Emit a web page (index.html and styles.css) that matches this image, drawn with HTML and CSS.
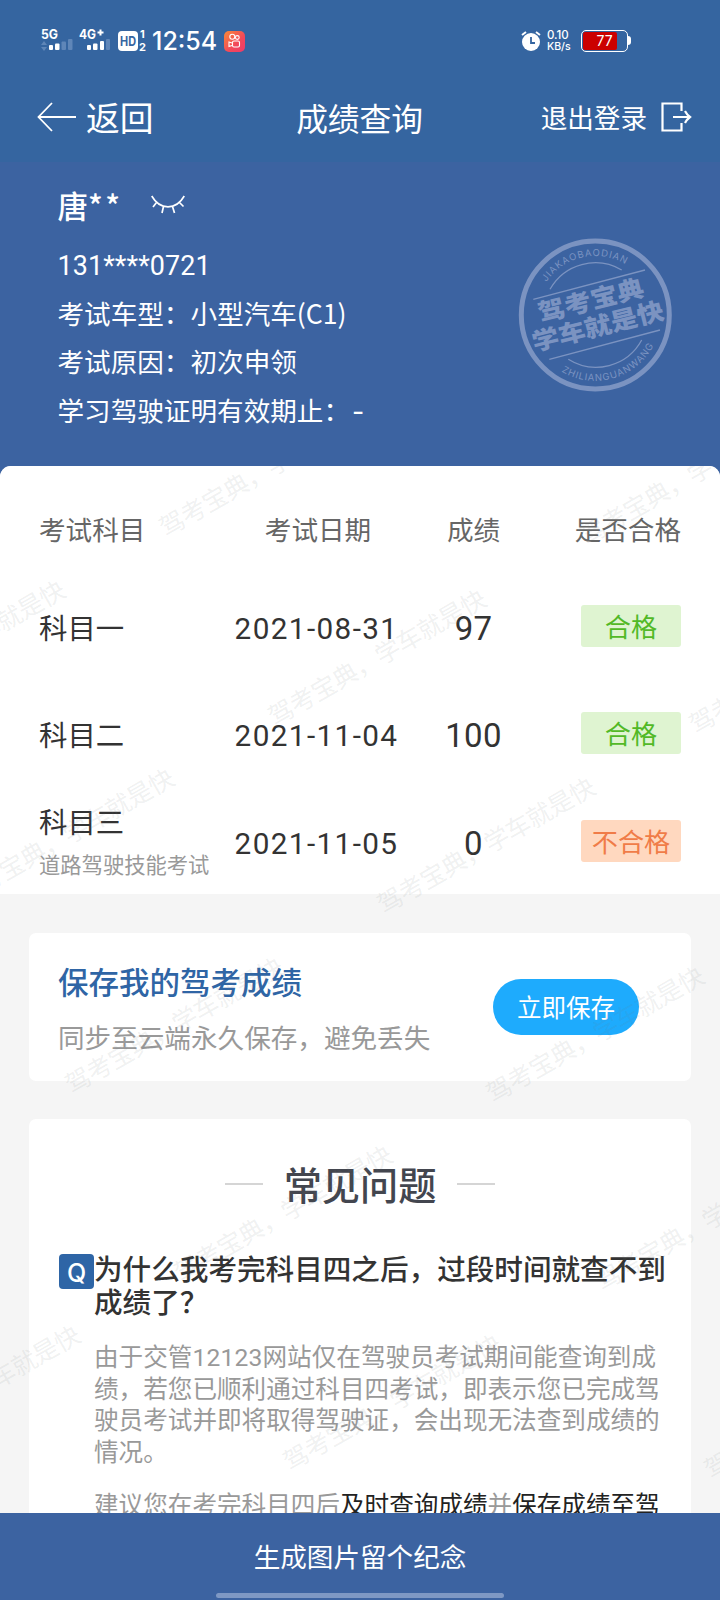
FILE: index.html
```html
<!DOCTYPE html>
<html lang="zh-CN">
<head>
    <meta charset="UTF-8">
    <meta name="viewport" content="width=device-width, initial-scale=1.0">
    <title>成绩查询</title>
    <link rel="stylesheet" href="styles.css">
</head>
<body>

    <div class="screen">
        <div class="top">
            <div class="status-bar">
                <svg class="signals" width="106" height="24" viewBox="0 0 106 24">
                    <g fill="#fff" class="net-label">
                        <text x="0" y="11" textLength="17" lengthAdjust="spacingAndGlyphs">5G</text>
                        <text x="38" y="11" textLength="17" lengthAdjust="spacingAndGlyphs">4G</text>
                        <path d="M56.500 4.500h6M59.500 1.500v6" stroke="#fff" stroke-width="2"/>
                        <rect x="8" y="17" width="4" height="5" rx="1"/>
                        <rect x="14" y="15.500" width="4.500" height="6.500" rx="1"/>
                        <rect x="46" y="17" width="4" height="5" rx="1"/>
                        <rect x="52" y="15.500" width="4.500" height="6.500" rx="1"/>
                        <rect x="59" y="13" width="4" height="9" rx="1"/>
                    </g>
                    <g fill="#5f86b8">
                        <path d="M0 17l3-4 3 4zM0 19h6l-3 4z"/>
                        <rect x="20.500" y="13.500" width="4.500" height="8.500" rx="1"/>
                        <rect x="27" y="11" width="4.500" height="11" rx="1"/>
                        <rect x="65" y="11" width="4" height="11" rx="1"/>
                    </g>
                    <rect x="77" y="3" width="20" height="20" rx="4" fill="#fff"/>
                    <text x="79" y="17.500" textLength="16" lengthAdjust="spacingAndGlyphs" class="hd">HD</text>
                    <text x="99" y="10" class="sim">1</text>
                    <text x="98" y="22.500" class="sim">2</text>
                </svg>
                <span class="time">12:54</span>
                <svg class="app-icon" width="21" height="21" viewBox="0 0 21 21">
                    <defs>
                        <linearGradient id="app-bg" x1="0" y1="0" x2="1" y2="1">
                            <stop offset="0" stop-color="#f98a38"/>
                            <stop offset=".6" stop-color="#f2485a"/>
                            <stop offset="1" stop-color="#ee3a6a"/>
                        </linearGradient>
                    </defs>
                    <rect width="21" height="21" rx="5" fill="url(#app-bg)"/>
                    <g fill="none" stroke="#fff" stroke-width="1.100">
                        <circle cx="8.300" cy="5.800" r="2.500"/>
                        <circle cx="13.300" cy="6.500" r="1.900"/>
                        <rect x="8.500" y="10" width="7" height="6" rx="1.500"/>
                        <path d="M8 12l-3-1v4.500l3-1"/>
                    </g>
                </svg>
                <svg class="alarm" width="20" height="22" viewBox="0 0 20 22">
                    <circle cx="10" cy="12" r="9" fill="#fff"/>
                    <path d="M1 5l4-3M19 5l-4-3" stroke="#fff" stroke-width="2"/>
                    <path d="M10 7v6h4" fill="none" stroke="#3565a0" stroke-width="1.800"/>
                </svg>
                <div class="speed"><span>0.10</span><span>KB/s</span></div>
                <div class="battery"><div class="battery-fill"></div><span>77</span></div>
            </div>

            <div class="nav-bar">
                <div class="back">
                    <svg width="40" height="30" viewBox="0 0 40 30" fill="none" stroke="#fff" stroke-width="1.800">
                        <path d="M15 1L1.500 15 15 29M1.500 15H39"/>
                    </svg>
                    <span>返回</span>
                </div>
                <div class="page-title">成绩查询</div>
                <div class="logout">
                    <span>退出登录</span>
                    <svg width="31" height="30" viewBox="0 0 31 30" fill="none" stroke="#fff" stroke-width="2.200">
                        <path d="M20.500 9V1.500H1.500v27h19V21M12 15h17M24 9c1.500 3 3 4.500 5 6-2 1.500-3.500 3-5 6"/>
                    </svg>
                </div>
            </div>
        </div>

        <div class="profile">
            <div class="name">
                <span>唐<span class="stars">**</span></span>
                <svg width="34" height="20" viewBox="0 0 34 20" fill="none" stroke="#fff" stroke-width="1.700">
                    <path d="M.7 1C9 15.500 25 15.500 33.300 1M5.500 7.500L2 12M12.500 11.500L11 18M21.500 11.500l2 6.500M28.500 7.500l4 4"/>
                </svg>
            </div>
            <p class="id-number">131****0721</p>
            <p>考试车型：小型汽车(C1)</p>
            <p>考试原因：初次申领</p>
            <p>学习驾驶证明有效期止：<span class="dash">-</span></p>

            <svg class="stamp" width="154" height="154" viewBox="0 0 154 154">
                <defs>
                    <path id="arc-top" d="M28.400 44A59 59 0 0 1 107.700 26.400"/>
                    <path id="arc-bottom" d="M43.300 133.600A66 66 0 0 0 135.800 107"/>
                </defs>
                <g fill="none" stroke="#7b93c1">
                    <circle cx="77.300" cy="77" r="74" stroke-width="5"/>
                    <path stroke-width="1.300" d="M15.300 61.300L127 32M31.300 121.300L142 92M32 51.300A52 52 0 0 1 103.700 32M50.300 121.300A52 52 0 0 0 123.700 102"/>
                </g>
                <g fill="#7b93c1">
                    <text class="stamp-ring"><textPath href="#arc-top" textLength="89">JIAKAOBAODIAN</textPath></text>
                    <text class="stamp-ring"><textPath href="#arc-bottom" textLength="107">ZHILIANGUANWANG</textPath></text>
                    <text class="stamp-text" transform="translate(73 63) rotate(-14) scale(1 .9)" y="9">驾考宝典</text>
                    <text class="stamp-text" transform="translate(80 89) rotate(-14) scale(1 .9)" y="9">学车就是快</text>
                </g>
            </svg>
        </div>

        <div class="content">
            <div class="scores">
                <div class="row head">
                    <span>考试科目</span><span>考试日期</span><span>成绩</span><span>是否合格</span>
                </div>
                <div class="row">
                    <div class="subject">科目一</div>
                    <div class="date">2021-08-31</div>
                    <div class="score">97</div>
                    <div class="badge pass">合格</div>
                </div>
                <div class="row">
                    <div class="subject">科目二</div>
                    <div class="date">2021-11-04</div>
                    <div class="score">100</div>
                    <div class="badge pass">合格</div>
                </div>
                <div class="row">
                    <div class="subject">科目三<small>道路驾驶技能考试</small></div>
                    <div class="date">2021-11-05</div>
                    <div class="score">0</div>
                    <div class="badge fail">不合格</div>
                </div>
            </div>

            <div class="card save">
                <div>
                    <h2>保存我的驾考成绩</h2>
                    <p>同步至云端永久保存，避免丢失</p>
                </div>
                <button type="button">立即保存</button>
            </div>

            <div class="card faq">
                <h2>常见问题</h2>
                <div class="qa">
                    <div class="q-icon">Q</div>
                    <div class="qa-body">
                        <h3>为什么我考完科目四之后，过段时间就查不到成绩了？</h3>
                        <p>由于交管<span class="num">12123</span>网站仅在驾驶员考试期间能查询到成绩，若您已顺利通过科目四考试，即表示您已完成驾驶员考试并即将取得驾驶证，会出现无法查到成绩的情况。</p>
                        <p>建议您在考完科目四后<b>及时查询成绩</b>并<b>保存成绩至驾</b></p>
                    </div>
                </div>
            </div>

            <svg class="watermark" width="720" height="1047" viewBox="0 466 720 1047">
                <defs>
                    <text id="mark" transform="rotate(-29.800)" x="-12.500" y="9.500" textLength="246">驾考宝典，学车就是快</text>
                </defs>
                <use href="#mark" x="172" y="523"/>
                <use href="#mark" x="593" y="531"/>
                <use href="#mark" x="-140" y="703"/>
                <use href="#mark" x="281" y="712"/>
                <use href="#mark" x="702" y="720"/>
                <use href="#mark" x="-31" y="891"/>
                <use href="#mark" x="390" y="900"/>
                <use href="#mark" x="78" y="1080"/>
                <use href="#mark" x="499" y="1089"/>
                <use href="#mark" x="187" y="1268"/>
                <use href="#mark" x="608" y="1277"/>
                <use href="#mark" x="-125" y="1448"/>
                <use href="#mark" x="296" y="1457"/>
                <use href="#mark" x="717" y="1465"/>
            </svg>
        </div>

        <div class="footer">
            <span>生成图片留个纪念</span>
            <div class="home-bar"></div>
        </div>
    </div>

</body>
</html>
```
FILE: styles.css
```css
* {
    box-sizing: border-box;
}

body {
    margin: 0;
    font-family: "Noto Sans CJK SC", sans-serif;
    color: #333;
}

h2, h3, p {
    margin: 0;
}

svg {
    display: block;
    flex: none;
}

.screen {
    width: 720px;
    height: 1600px;
    display: flex;
    flex-direction: column;
    overflow: hidden;
    background-color: #3c63a1;
}

/* status bar and navigation */
.top {
    height: 162px;
    background-color: #3565a0;
    color: white;
}

.status-bar {
    height: 75px;
    padding: 7px 92px 0 41px;
    display: flex;
    align-items: center;
    font-family: Inter, sans-serif;
}

.signals {
    overflow: visible;
    margin-top: -3px;
}

.net-label {
    font-size: 13px;
    font-weight: 700;
}

.hd {
    font-size: 13px;
    font-weight: 700;
    fill: #3565a0;
}

.sim {
    font-size: 11px;
    font-weight: 700;
    fill: white;
}

.time {
    width: 65px;
    margin-left: 5px;
    font-size: 25px;
    font-weight: 500;
    white-space: nowrap;
}

.app-icon {
    margin-left: 7px;
}

.alarm {
    margin-left: auto;
}

.speed {
    width: 26px;
    margin-left: 6px;
    display: flex;
    flex-direction: column;
    font-size: 10.5px;
    line-height: 12px;
    font-weight: 500;
    white-space: nowrap;
}

.speed span:first-child {
    font-size: 11.5px;
}

.battery {
    position: relative;
    width: 47px;
    height: 22px;
    margin-left: 8px;
    padding: 1px;
    border: 1.5px solid white;
    border-radius: 5px;
}

.battery::after {
    content: "";
    position: absolute;
    right: -4px;
    top: 5px;
    width: 3px;
    height: 9px;
    background-color: white;
    border-radius: 0 3px 3px 0;
}

.battery-fill {
    width: 34px;
    height: 100%;
    background-color: #cb0000;
    border-radius: 2px;
}

.battery span {
    position: absolute;
    left: 0;
    top: 0;
    width: 100%;
    line-height: 19px;
    font-size: 14px;
    text-align: center;
}

.nav-bar {
    height: 84px;
    padding: 0 28px 0 37px;
    display: grid;
    grid-template-columns: 1fr auto 1fr;
    align-items: center;
    line-height: 48px;
}

.back {
    display: flex;
    align-items: center;
    gap: 9px;
    font-size: 33.8px;
}

.page-title {
    padding-right: 10px;
    font-size: 31.7px;
}

.logout {
    display: flex;
    align-items: center;
    justify-content: flex-end;
    gap: 14px;
    font-size: 26.6px;
}

/* candidate info */
.profile {
    position: relative;
    height: 304px;
    padding: 20px 58px 0 57.5px;
    color: white;
    font-size: 26.6px;
    line-height: 48.5px;
}

.name {
    display: flex;
    align-items: center;
    gap: 28px;
    height: 46px;
    margin-bottom: 12px;
    font-size: 30.5px;
    font-weight: 500;
}

.stars {
    letter-spacing: 2.5px;
}

.profile .id-number {
    padding-top: 2px;
    margin-bottom: -2px;
    font-family: Roboto, sans-serif;
    font-size: 26.9px;
    letter-spacing: 0.1px;
}

.dash {
    padding-left: 2px;
    font-family: Inter, sans-serif;
}

.stamp {
    position: absolute;
    left: 518px;
    top: 76px;
}

.stamp-ring {
    font-family: Inter, sans-serif;
    font-size: 9.5px;
}

.stamp-text {
    font-size: 27px;
    font-weight: 900;
    text-anchor: middle;
}

/* scrolling area */
.content {
    position: relative;
    flex: 1;
    min-height: 0;
    overflow: hidden;
    background-color: #f5f5f5;
    border-radius: 11px 11px 0 0;
}

.scores {
    height: 428px;
    padding: 19px 39px 0;
    background-color: white;
}

.row {
    display: grid;
    grid-template-columns: 180px 198px 113px 1fr;
    align-items: center;
    justify-items: center;
    height: 107.5px;
    font-size: 28.4px;
}

.row > :first-child {
    justify-self: start;
}

.row > :last-child {
    justify-self: end;
}

.head {
    height: 87px;
    margin-bottom: 1px;
    font-size: 26.6px;
    color: #666;
}

.subject {
    line-height: 40px;
}

.subject small {
    display: block;
    margin-bottom: -3px;
    padding-top: 2px;
    line-height: 42px;
    font-size: 21.3px;
    color: #999;
}

.date {
    padding: 3px 3px 0 0;
    font-family: Roboto, sans-serif;
    font-size: 29.7px;
    letter-spacing: 1.4px;
}

.score {
    padding-top: 3px;
    font-family: Roboto, sans-serif;
    font-size: 33px;
    letter-spacing: 0.3px;
}

.badge {
    width: 100px;
    height: 42px;
    margin-bottom: 2px;
    line-height: 42px;
    border-radius: 3px;
    font-size: 26.2px;
    text-align: center;
}

.pass {
    background-color: #dff4d1;
    color: #52b927;
}

.fail {
    background-color: #ffd8bf;
    color: #f07c48;
}

.card {
    margin: 39px 29px 0;
    background-color: white;
    border-radius: 7px;
}

.save {
    height: 148px;
    padding: 3px 52px 0 29px;
    display: flex;
    align-items: center;
    justify-content: space-between;
}

.save h2 {
    font-size: 30.5px;
    line-height: 56px;
    font-weight: 500;
    color: #2f65a5;
}

.save p {
    font-size: 26.6px;
    line-height: 56px;
    color: #999;
}

.save button {
    width: 146px;
    height: 56px;
    margin-bottom: 3px;
    padding: 0 0 1px;
    border: none;
    border-radius: 28px;
    background-color: #1eabfd;
    color: white;
    font-family: inherit;
    font-size: 24.5px;
}

.faq {
    margin-top: 38px;
    padding: 35px 30px 0;
}

.faq h2 {
    display: flex;
    align-items: center;
    justify-content: center;
    gap: 21px;
    font-size: 38.2px;
    line-height: 60px;
    font-weight: 500;
    color: #43464f;
}

.faq h2::before,
.faq h2::after {
    content: "";
    width: 38px;
    height: 2px;
    background-color: #d5d5d5;
}

.qa {
    display: flex;
    margin-top: 37px;
}

.q-icon {
    flex: none;
    width: 35px;
    height: 35px;
    margin-top: 3px;
    border-radius: 4px;
    background-color: #2e65a6;
    color: white;
    font-family: Inter, sans-serif;
    font-size: 25px;
    font-weight: 500;
    line-height: 38px;
    text-align: center;
}

.qa h3 {
    width: 574px;
    font-size: 28.6px;
    font-weight: 500;
    line-height: 33px;
}

.qa p {
    margin-top: 23px;
    width: 568px;
    font-size: 24.6px;
    line-height: 31.6px;
    color: #999;
}

.qa p + p {
    margin-top: 22px;
}

.num {
    font-family: Roboto, sans-serif;
    line-height: 1;
    letter-spacing: 0.2px;
}

.qa b {
    font-weight: 400;
    color: #222;
}

.watermark {
    position: absolute;
    left: 0;
    top: 0;
    pointer-events: none;
    font-size: 25px;
    fill: rgba(110, 120, 125, 0.11);
}

/* bottom action */
.footer {
    position: relative;
    height: 87px;
    color: white;
    font-size: 26.6px;
    line-height: 86px;
    text-align: center;
}

.home-bar {
    position: absolute;
    left: 216px;
    bottom: 2px;
    width: 288px;
    height: 5px;
    border-radius: 3px;
    background-color: #7e98c4;
}
```
